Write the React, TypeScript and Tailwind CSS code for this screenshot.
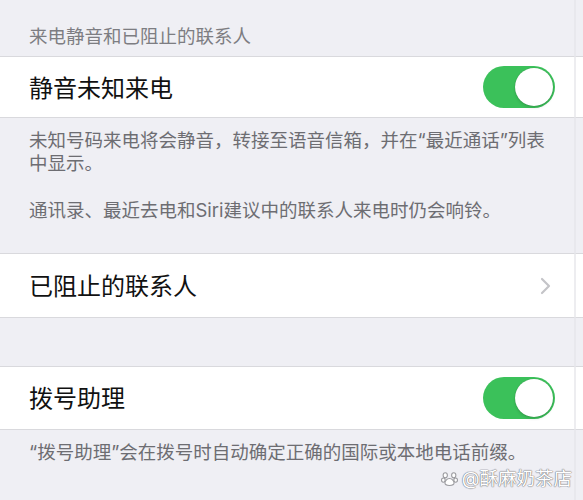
import React from 'react';

const Toggle = () => (
  <div className="relative h-[42px] w-[72px] rounded-full bg-[#3bc15a]">
    <div className="absolute right-[2px] top-[2px] h-[38px] w-[38px] rounded-full bg-white shadow-[0_0_1px_rgba(0,0,0,0.3),0_2px_3px_rgba(0,0,0,0.12)]" />
  </div>
);

const Chevron = () => (
  <svg width="11" height="18" viewBox="0 0 11 18" fill="none">
    <path d="M2 2l7 7-7 7" stroke="#c4c4c8" strokeWidth="2.2" strokeLinecap="round" strokeLinejoin="round" />
  </svg>
);

const Paw = () => (
  <svg width="17" height="17" viewBox="0 0 16 16" fill="white" stroke="#9a9a9e" strokeWidth="1">
    <ellipse cx="4" cy="5" rx="2" ry="2.4" />
    <ellipse cx="12" cy="5" rx="2" ry="2.4" />
    <ellipse cx="2.2" cy="9.5" rx="1.7" ry="2" />
    <ellipse cx="13.8" cy="9.5" rx="1.7" ry="2" />
    <path d="M8 8c-2.6 0-4.3 2.6-4.3 4.3 0 1.6 1.5 2.2 4.3 2.2s4.3-0.6 4.3-2.2C12.3 10.6 10.6 8 8 8z" />
  </svg>
);

export default function App() {
  return (
    <div className="relative h-[500px] w-[583px] overflow-hidden bg-[#efeff4] font-['Inter','Noto_Sans_CJK_SC',sans-serif]">
      {/* section header */}
      <div className="h-[56px] px-[29px] pt-[24px] text-[18.5px] leading-[24px] text-[#7d7d82]">
        来电静音和已阻止的联系人
      </div>

      <div className="flex h-[62px] items-center justify-between border-y border-[#d9d9dd] bg-white pl-[29px] pr-[28px]">
        <span className="mt-[4px] text-[24px] leading-[30px] text-[#111]">静音未知来电</span>
        <Toggle />
      </div>

      <div className="h-[135px] px-[29px] pt-[11px] text-[18.5px] leading-[23px] text-[#6d6d72]">
        <p>未知号码来电将会静音，转接至语音信箱，并在“最近通话”列表中显示。</p>
        <p className="mt-[24px]">通讯录、最近去电和Siri建议中的联系人来电时仍会响铃。</p>
      </div>

      <div className="flex h-[65px] items-center justify-between border-y border-[#d9d9dd] bg-white pl-[29px] pr-[32px]">
        <span className="mt-[2px] text-[24px] leading-[30px] text-[#111]">已阻止的联系人</span>
        <Chevron />
      </div>

      <div className="h-[48px]" />

      <div className="flex h-[64px] items-center justify-between border-y border-[#d9d9dd] bg-white pl-[29px] pr-[28px]">
        <span className="mt-[2px] text-[24px] leading-[30px] text-[#111]">拨号助理</span>
        <Toggle />
      </div>

      <div className="px-[29px] pt-[11px] text-[18.5px] leading-[23px] text-[#6d6d72]">
        <p>“拨号助理”会在拨号时自动确定正确的国际或本地电话前缀。</p>
      </div>

      {/* scroll edge */}
      <div className="absolute inset-y-0 right-[7px] w-[2px] bg-[#e6e6ea]/70" />

      {/* watermark */}
      <div className="absolute right-[11px] top-[467px] flex items-center gap-[4px] text-[18.5px] leading-[22px] text-white [text-shadow:0_0_1px_#7d7d82,0_0_1px_#7d7d82,0_0_1px_#7d7d82]">
        <Paw />
        <span>@酥麻奶茶店</span>
      </div>
    </div>
  );
}
